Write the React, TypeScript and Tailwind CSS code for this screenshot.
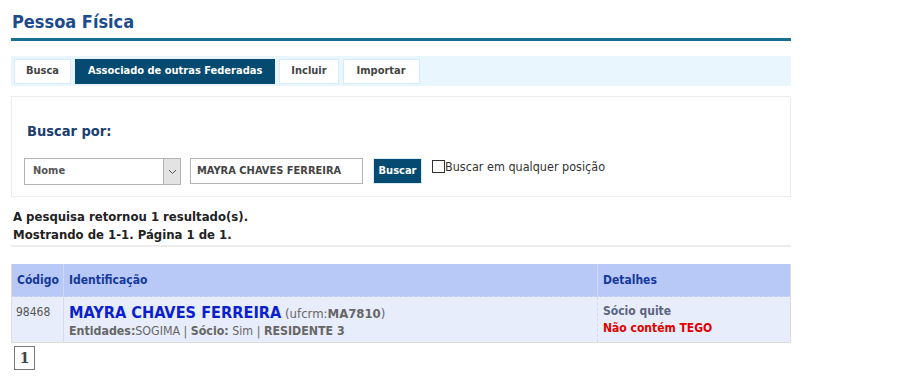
import React from "react";

export default function App() {
  const f = { fontFamily: '"DejaVu Sans Condensed", "DejaVu Sans", Verdana, sans-serif' };
  return (
    <div className="w-[917px] h-[377px] bg-white overflow-hidden" style={f}>
      <div className="w-[780px] ml-[11px]">
        <h1 className="pt-[11px] pl-[1px] text-[18px] font-bold leading-[22px] text-[#1c4c8c]">Pessoa Física</h1>
        <div className="mt-[5px] h-[3px] bg-[#1a6e92]" />
        <div className="mt-[15px] h-[30px] bg-[#eaf6fd] flex items-center gap-[4px] pl-[3px]">
          <div className="h-[25px] px-[11px] flex items-center bg-white border border-[#d6ecf8] text-[11px] font-bold text-[#444]">Busca</div>
          <div className="h-[25px] px-[13px] flex items-center bg-[#054a70] text-[11px] font-bold text-white">Associado de outras Federadas</div>
          <div className="h-[25px] px-[11px] flex items-center bg-white border border-[#d6ecf8] text-[11px] font-bold text-[#444]">Incluir</div>
          <div className="h-[25px] px-[13px] flex items-center bg-white border border-[#d6ecf8] text-[11px] font-bold text-[#444]">Importar</div>
        </div>
        <div className="mt-[10px] h-[101px] border border-[#ececec] pl-[12px]">
          <div className="pt-[25px] pl-[3px] text-[14.5px] font-bold text-[#1d3f6e] leading-[18px]">Buscar por:</div>
          <div className="mt-[18px] flex items-start">
            <div className="w-[157px] h-[27px] border border-[#b4b4b4] flex">
              <div className="flex-1 flex items-center pl-[8px] text-[11px] font-bold text-[#555]">Nome</div>
              <div className="w-[17px] bg-[#e3e3e3] border-l border-[#b4b4b4] flex items-center justify-center">
                <svg width="9" height="6" viewBox="0 0 9 6"><path d="M1 1 L4.5 4.5 L8 1" stroke="#555" fill="none" strokeWidth="1" /></svg>
              </div>
            </div>
            <div className="ml-[9px] w-[173px] h-[26px] border border-[#b4b4b4] flex items-center pl-[6px] text-[11px] font-bold text-[#444]">MAYRA CHAVES FERREIRA</div>
            <div className="ml-[10px] w-[49px] h-[26px] bg-[#054a70] border border-[#d6ecf8] flex items-center justify-center text-[11px] font-bold text-white">Buscar</div>
            <div className="ml-[10px] mt-[1px] flex items-center text-[12.5px] text-[#333] leading-[16px]">
              <span className="w-[13px] h-[13px] -mt-[2px] border border-[#333] bg-white inline-block" />
              <span>Buscar em qualquer posição</span>
            </div>
          </div>
        </div>
        <div className="mt-[11px] pl-[2px] text-[13px] font-bold text-[#222] leading-[18px]">
          <div>A pesquisa retornou 1 resultado(s).</div>
          <div>Mostrando de 1-1. Página 1 de 1.</div>
        </div>
        <div className="mt-[1px] h-[2px] bg-[#ececec]" />
        <div className="mt-[17px] border border-[#dcdcdc] border-t-0">
          <div className="flex h-[33px] bg-[#b8c9f8] text-[12px] font-bold text-[#14399c] border-b border-dashed border-[#cdd8f6]">
            <div className="w-[52px] flex items-center pl-[5px] border-r border-[#cfd9f5]">Código</div>
            <div className="flex-1 flex items-center pl-[5px] border-r border-[#cfd9f5]">Identificação</div>
            <div className="w-[192px] flex items-center pl-[5px]">Detalhes</div>
          </div>
          <div className="flex h-[45px] bg-[#e8edfb]">
            <div className="w-[52px] pl-[4px] pt-[6px] text-[12px] text-[#555] border-r border-[#d4dbee]">98468</div>
            <div className="flex-1 pl-[5px] pt-[6px] border-r border-dashed border-[#d4dbee]">
              <div className="leading-[19px] whitespace-nowrap">
                <span className="text-[16.2px] font-bold text-[#0c1fce]">MAYRA CHAVES FERREIRA</span>
                <span className="text-[13px] text-[#666]"> (ufcrm:<b>MA7810</b>)</span>
              </div>
              <div className="text-[12.3px] text-[#666] leading-[16px] whitespace-nowrap">
                <b>Entidades:</b>SOGIMA | <b>Sócio:</b> Sim | <b>RESIDENTE 3</b>
              </div>
            </div>
            <div className="w-[192px] pl-[5px] pt-[6px] text-[12px] font-bold leading-[17px]">
              <div className="text-[#5c6480]">Sócio quite</div>
              <div className="text-[#e00000]">Não contém TEGO</div>
            </div>
          </div>
        </div>
        <div className="mt-[3px] ml-[3px] w-[21px] h-[24px] border border-[#777] flex items-center justify-center text-[14px] font-bold text-[#444]" style={{ fontFamily: '"DejaVu Serif", serif' }}>1</div>
      </div>
    </div>
  );
}
